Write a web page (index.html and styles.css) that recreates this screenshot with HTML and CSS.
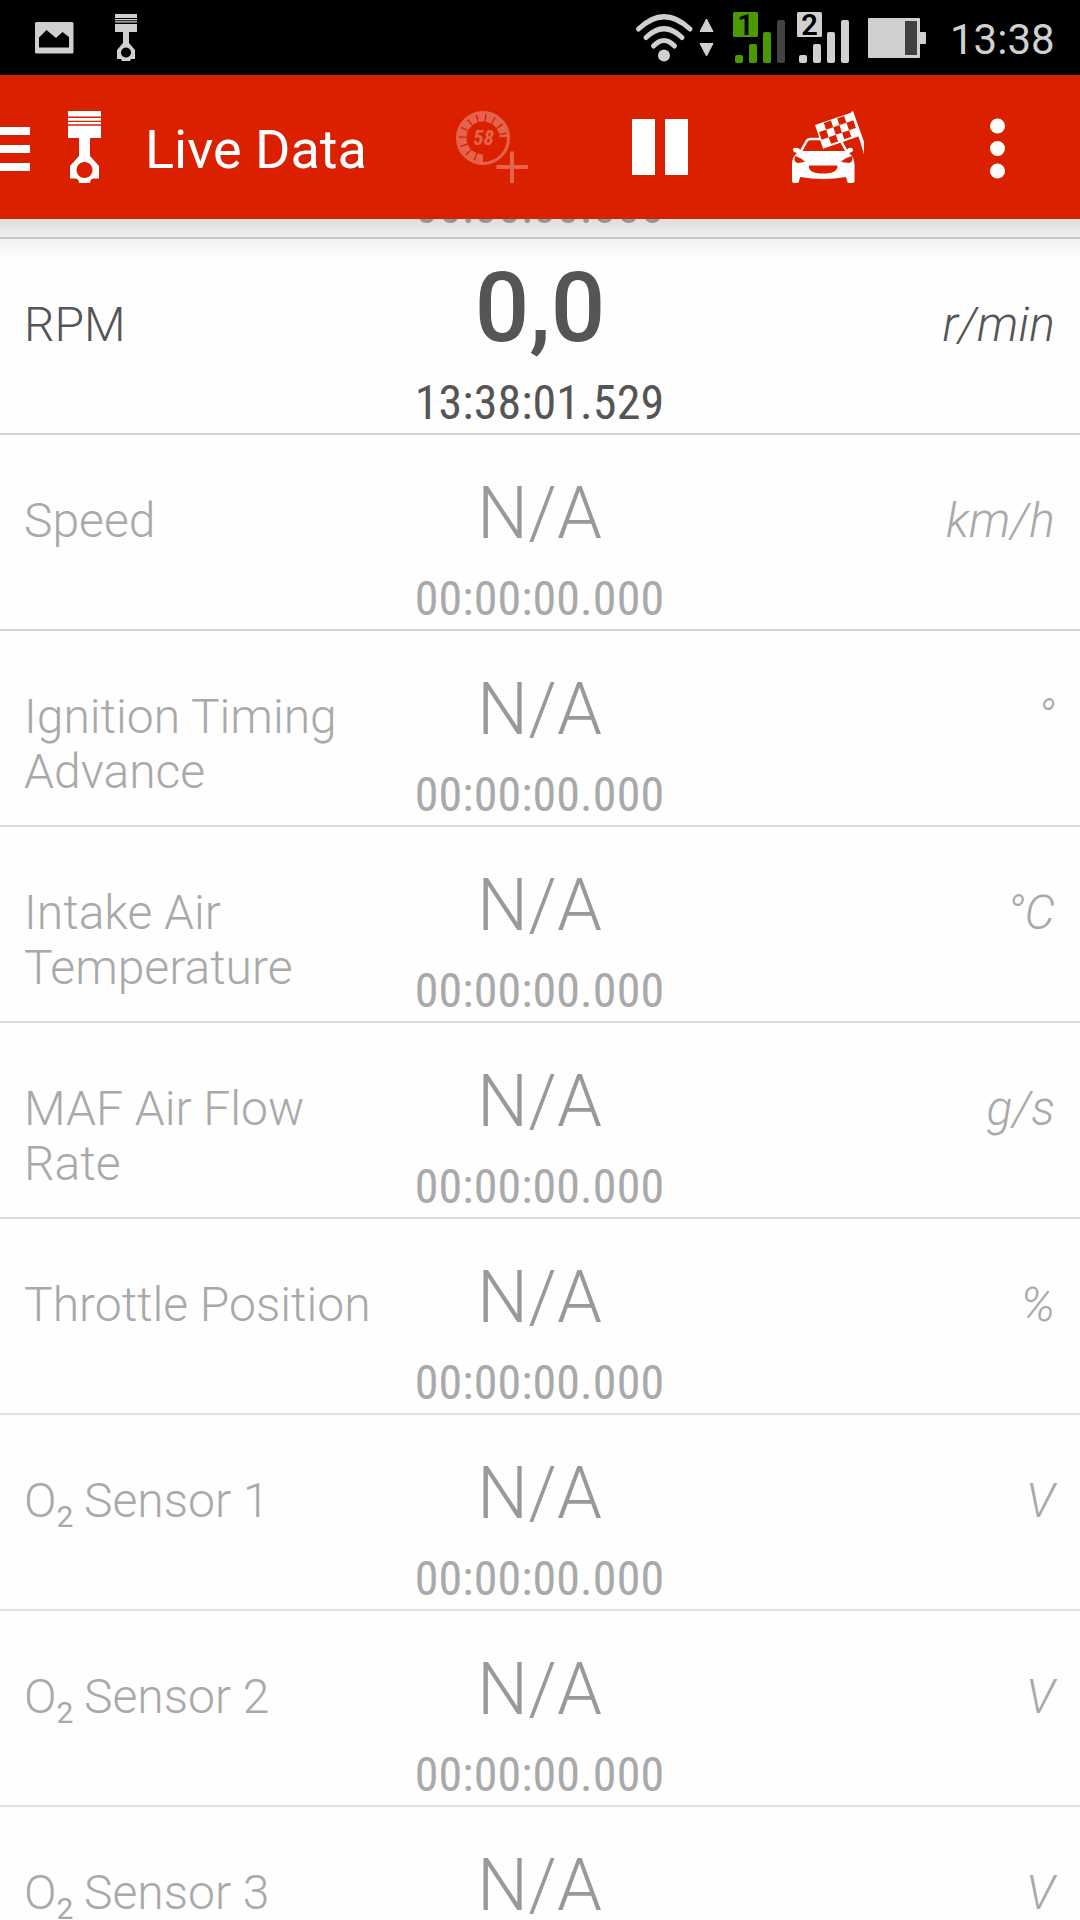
FILE: index.html
```html
<!DOCTYPE html>
<html lang="en">
<head>
    <meta charset="UTF-8" />
    <meta name="viewport" content="width=device-width, initial-scale=1.0" />
    <title>Live Data</title>
    <link rel="stylesheet" href="styles.css">
</head>
<body>
    <div class="status-bar">
        <svg class="status-icons" width="150" height="75" viewBox="0 0 150 75">
            <path fill="#d0d0d0" fill-rule="evenodd" d="M36 22H72Q73.500 22 73.500 23.500V52Q73.500 53.500 72 53.500H36.500Q35 53.500 35 52V23.500Q35 22 36.500 22ZM39 37.500V47.500H69V37L62.500 32L56 38L46.500 30Z" />
            <g fill="#d0d0d0">
                <path d="M115 14h22v4h-22zM115 19h22v1.200h-22zM115 21.300h22v1.200h-22zM115 24h22v8h-22zM123 32h6v14h-6z" />
                <path fill-rule="evenodd" d="M123 43h6l6 7v9h-4l-1 2h-8l-1-2h-4v-9zM126 47.500a5 5 0 1 0 0.010 0z" />
            </g>
        </svg>
        <svg class="status-signal" width="310" height="75" viewBox="620 0 310 75">
            <g fill="none" stroke="#d0d0d0" stroke-width="5" stroke-linecap="round">
                <path d="M638.500 29Q664 4.500 690 29" />
                <path d="M646 37.500Q664 20 682 37.500" />
                <path d="M653.500 46Q664 35 674.500 46" />
            </g>
            <circle cx="664" cy="55.500" r="6" fill="#d0d0d0" />
            <path fill="#d0d0d0" stroke="#d0d0d0" stroke-linejoin="round" d="M706.500 19l6.500 12.500h-13zM706.500 56l6.500-12.500h-13z" />
            <g fill="#4a9a00">
                <rect x="733" y="12" width="25" height="25" rx="1.500" />
                <rect x="735" y="55" width="8" height="8" rx="2" />
                <rect x="749" y="44" width="8" height="19" rx="2" />
                <rect x="763" y="32" width="8" height="31" rx="2" />
            </g>
            <rect x="777" y="20" width="8" height="43" rx="2" fill="#434343" />
            <g fill="#d0d0d0">
                <rect x="797" y="12" width="25" height="25" rx="1.500" />
                <rect x="799" y="55" width="8" height="8" rx="2" />
                <rect x="813" y="44" width="8" height="19" rx="2" />
                <rect x="827" y="32" width="8" height="31" rx="2" />
                <rect x="841" y="20" width="8" height="43" rx="2" />
                <rect x="868" y="18" width="52" height="40" rx="1" />
                <rect x="919" y="32" width="7" height="12" rx="1" />
            </g>
            <rect x="905" y="21" width="12" height="34" fill="#404040" />
            <text class="sim" x="745.500" y="35">1</text>
            <text class="sim" x="809.500" y="35">2</text>
        </svg>
        <span class="clock">13:38</span>
    </div>

    <header class="app-bar">
        <svg class="menu-icon" width="30" height="144" viewBox="0 0 30 144">
            <path fill="#fff" d="M0 52h30v8H0zM0 70h30v8H0zM0 88h30v8H0z" />
        </svg>
        <svg class="piston-icon" width="34" height="72" viewBox="0 0 34 72">
            <path fill="#fff" d="M0 0h33v5.500H0zM0 7h33v2.700H0zM0 11h33v2.200H0zM0 14.700h33V27H0zM11 27h11v18H11z" />
            <path fill="#fff" fill-rule="evenodd" d="M11 45h11l9 10v12.500h-6q-3 1-3 4.500H11q0-3.500-3-4.500H2V55zM16.500 51a8 8 0 1 0 0.010 0z" />
        </svg>
        <h1>Live Data</h1>
        <svg class="bar-actions" width="650" height="144" viewBox="430 75 650 144">
            <!-- add gauge, disabled -->
            <g class="disabled">
                <circle cx="483" cy="138" r="25.500" fill="none" stroke="#fff" stroke-width="3" />
                <path fill="none" stroke="#fff" stroke-width="8" stroke-dasharray="7 1.400" d="M483 158.500A20.500 20.500 0 1 1 503.500 137" />
                <path fill="#fff" d="M510 151.500h4v13.500h14v4h-14v14h-4v-14h-13.500v-4H510z" />
                <text class="gauge-value" x="483.500" y="145">58</text>
            </g>
            <!-- pause -->
            <path fill="#fff" d="M632 119h23v56h-23zM665 119h23v56h-23z" />
            <!-- race car -->
            <path fill="none" stroke="#fff" stroke-width="2.500" d="M800.500 152L807 140.500Q808 139 811 139H835Q840 139 841.500 142L847 152" />
            <path fill="#fff" fill-rule="evenodd" d="M801 151H846L847.500 149Q849 147 852 148Q854 150 852 152L849 153Q854.500 157 854.500 165V181Q854.500 183 852.500 183H849Q847 183 847 181L846 177Q823 181 800 177L799 181Q799 183 797 183H794Q792 183 792 181V164Q792 157 797 153L794 152Q792 149 794 148Q797 147 799.500 149ZM795 156Q793 162 798 163L805 162Q802 158 795 156ZM852 156Q853.500 162 849 163L841 162Q844 158 852 156ZM809 165.500Q808 173.500 823 173.500Q838 173.500 837.500 165.500Z" />
            <g transform="translate(815 125) rotate(-19)">
                <path fill="#fff" d="M0 0H39.500V25H0z" />
                <path fill="#db2000" d="M9 1h7.500v7H9zM23 1h7.500v7H23zM1.500 8H9v8H1.500zM16.500 8H23v8H16.500zM30.500 8H38v8H30.500zM9 16h7.500v7H9zM23 16h7.500v7H23z" />
            </g>
            <path fill="#fff" d="M851 112L853 111L864 142V154Z" />
            <!-- overflow -->
            <circle cx="997.500" cy="126" r="7.500" fill="#fff" />
            <circle cx="997.500" cy="148.500" r="7.500" fill="#fff" />
            <circle cx="997.500" cy="171" r="7.500" fill="#fff" />
        </svg>
    </header>

    <main class="list">
        <div class="row dark">
            <div class="name"></div>
            <div class="value"></div>
            <div class="unit"></div>
            <div class="time">00:00:00.000</div>
        </div>
        <div class="row dark active">
            <div class="name">RPM</div>
            <div class="value">0,0</div>
            <div class="unit">r/min</div>
            <div class="time">13:38:01.529</div>
        </div>
        <div class="row dark">
            <div class="name">Speed</div>
            <div class="value">N/A</div>
            <div class="unit">km/h</div>
            <div class="time">00:00:00.000</div>
        </div>
        <div class="row">
            <div class="name">Ignition Timing Advance</div>
            <div class="value">N/A</div>
            <div class="unit">°</div>
            <div class="time">00:00:00.000</div>
        </div>
        <div class="row">
            <div class="name">Intake Air Temperature</div>
            <div class="value">N/A</div>
            <div class="unit">°C</div>
            <div class="time">00:00:00.000</div>
        </div>
        <div class="row">
            <div class="name">MAF Air Flow Rate</div>
            <div class="value">N/A</div>
            <div class="unit">g/s</div>
            <div class="time">00:00:00.000</div>
        </div>
        <div class="row light">
            <div class="name">Throttle Position</div>
            <div class="value">N/A</div>
            <div class="unit">%</div>
            <div class="time">00:00:00.000</div>
        </div>
        <div class="row light">
            <div class="name">O<sub>2</sub> Sensor 1</div>
            <div class="value">N/A</div>
            <div class="unit">V</div>
            <div class="time">00:00:00.000</div>
        </div>
        <div class="row light">
            <div class="name">O<sub>2</sub> Sensor 2</div>
            <div class="value">N/A</div>
            <div class="unit">V</div>
            <div class="time">00:00:00.000</div>
        </div>
        <div class="row light">
            <div class="name">O<sub>2</sub> Sensor 3</div>
            <div class="value">N/A</div>
            <div class="unit">V</div>
        </div>
    </main>
</body>
</html>
```
FILE: styles.css
```css
* {
    box-sizing: border-box;
}
body {
    margin: 0;
    height: 1920px;
    overflow: hidden;
    display: flex;
    flex-direction: column;
    background: #fefefe;
    font-family: Roboto, "Liberation Sans", sans-serif;
}
svg {
    display: block;
    flex: none;
}
.status-bar {
    position: relative;
    z-index: 2;
    flex: none;
    display: flex;
    align-items: center;
    height: 75px;
    padding-right: 26px;
    background: #000;
}
.status-signal {
    margin-left: auto;
}
.sim {
    font-size: 29px;
    font-weight: 600;
    text-anchor: middle;
    fill: #000;
}
.clock {
    margin-left: 20px;
    padding-top: 3px;
    width: 104px;
    font-size: 42px;
    line-height: 75px;
    text-align: right;
    color: #d0d0d0;
}
.app-bar {
    position: relative;
    z-index: 2;
    flex: none;
    display: flex;
    align-items: center;
    height: 144px;
    background: #db2000;
}
/* shadow over the top of the list */
.app-bar::after {
    content: "";
    position: absolute;
    top: 100%;
    left: 0;
    width: 100%;
    height: 38px;
    background: linear-gradient(rgba(0, 0, 0, 0.13), rgba(0, 0, 0, 0.055) 50%, rgba(0, 0, 0, 0));
}
.piston-icon {
    margin-left: 38px;
}
h1 {
    margin: 0 0 0 43px;
    padding-top: 5px;
    width: 285px;
    font-size: 54px;
    font-weight: 400;
    line-height: 144px;
    white-space: nowrap;
    color: #fff;
}
.disabled {
    opacity: 0.3;
}
.gauge-value {
    font-family: "Roboto Condensed", Roboto, sans-serif;
    font-size: 21px;
    font-stretch: 75%;
    font-weight: 700;
    font-style: italic;
    text-anchor: middle;
    fill: #fff;
}

/* the first row is scrolled under the app bar */
.list {
    flex: 1;
    margin-top: -176px;
}
.row {
    display: grid;
    grid-template-columns: 360px 1fr 360px;
    grid-template-rows: 136px 58px;
    height: 196px;
    padding: 0 24px;
    border-bottom: 2px solid #dadada;
    font-size: 48px;
    font-weight: 300;
    line-height: 56px;
    color: #a9a9a9;
}
.row.dark {
    border-color: #d3d3d3;
}
.row.light {
    border-color: #e1e1e1;
}
.name {
    grid-row: 1 / 3;
    padding-top: 58px;
    line-height: 55px;
}
sub {
    position: relative;
    top: 10px;
    font-size: 30px;
    font-weight: 400;
    line-height: 0;
    vertical-align: baseline;
    margin-right: -1px;
}
.value {
    padding-right: 1px;
    font-size: 72px;
    line-height: 157px;
    text-align: center;
    color: #999;
}
.unit {
    padding-top: 58px;
    padding-right: 1px;
    font-style: italic;
    text-align: right;
    letter-spacing: 0.2px;
}
.time {
    grid-column: 2;
    grid-row: 2;
    font-family: "Roboto Condensed", Roboto, sans-serif;
    font-stretch: 75%;
    font-weight: 400;
    letter-spacing: 0.1px;
    text-align: center;
    white-space: nowrap;
    padding-right: 1px;
}
.active,
.active .value {
    color: #555;
}
.active .value {
    padding-right: 0;
    font-size: 96px;
    font-weight: 500;
    line-height: 139px;
}
```
